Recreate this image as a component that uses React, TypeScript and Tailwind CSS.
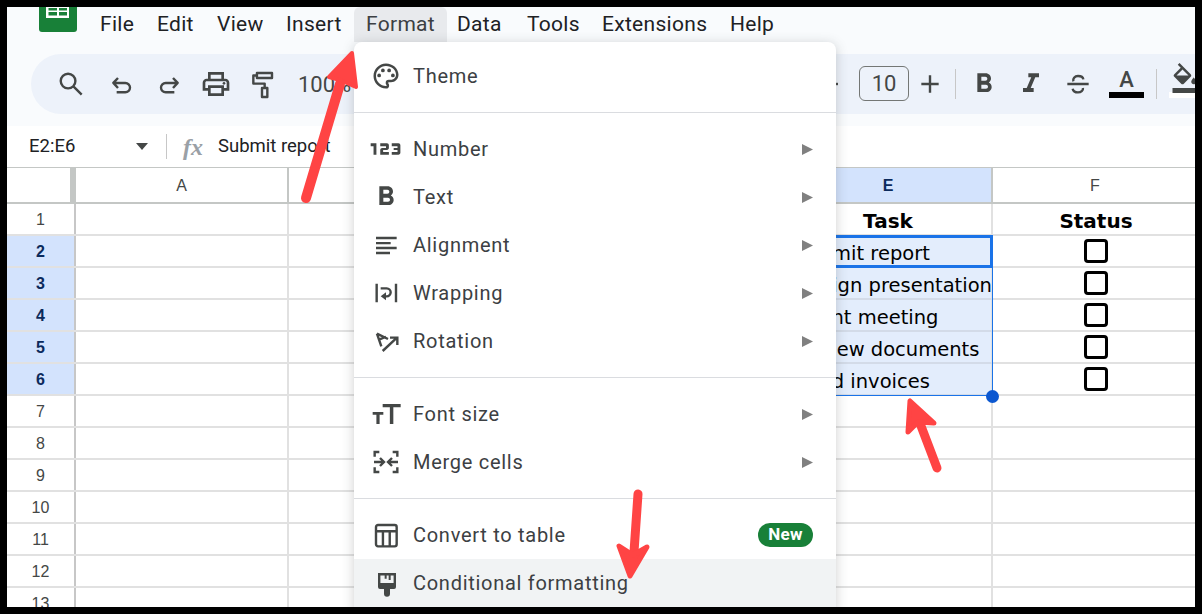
import {
  MdFormatBold,
  MdFormatItalic,
  MdOutlineFormatColorFill,
  MdOutlinePalette,
  MdOutlinePrint,
  Md123,
} from "react-icons/md";
import type { ReactNode } from "react";

const tabs = [
  { label: "File", cls: "ml-[23px] w-[57px]" },
  { label: "Edit", cls: "w-[60px]" },
  { label: "View", cls: "w-[69px]" },
  { label: "Insert", cls: "w-[68px]" },
];
const tabsAfter = [
  { label: "Data", cls: "ml-[10px] w-[70px]" },
  { label: "Tools", cls: "w-[75px]" },
  { label: "Extensions", cls: "w-[128px]" },
  { label: "Help", cls: "w-[60px]" },
];

function Line({ d, fill }: { d: string; fill?: boolean }) {
  return (
    <svg
      viewBox="0 0 24 24"
      className="w-8 h-8 shrink-0"
      fill={fill ? "currentColor" : "none"}
      stroke="currentColor"
      strokeWidth="1.8"
      strokeLinejoin="round"
    >
      <path d={d} />
    </svg>
  );
}

const IconSearch = () => <Line d="M9.800 4.300a5.500 5.500 0 1 0 0 11a5.500 5.500 0 0 0 0-11zM13.800 13.800L20 20" />;
const IconUndo = () => <Line d="M9 7.500L5.500 11.200L9 15M5.500 11.200H14.500a3.500 3.500 0 0 1 0 7H8" />;
const IconRedo = () => <Line d="M15 7.500L18.500 11.200L15 15M18.500 11.200H9.500a3.500 3.500 0 0 0 0 7H16" />;
const IconRoller = () => <Line d="M6.700 3.800H18V7.500H6.700zM6.700 5.600H4V11.700H12.500V15M10.500 15H14.500V21.700H10.500z" />;
const IconMinus = () => <Line d="M6 12H18" />;
const IconPlus = () => <Line d="M5.500 12H18.500M12 5.500V18.500" />;
const IconStrike = () => (
  <Line d="M4 12H20M8.500 10c-.6-2 1-4 3.500-4s3.800 1 4 2.500M8 15.500c.3 1.500 1.700 2.800 4 2.800s4-1.400 3.700-3.300" />
);
const IconAlign = () => <Line d="M4.500 6.800H20M4.500 10.600H15.500M4.500 14.300H20M4.500 18H15" />;
const IconTable = () => <Line d="M6 4.500H18.500a1.500 1.500 0 0 1 1.500 1.500V19a1.500 1.500 0 0 1-1.500 1.500H6A1.500 1.500 0 0 1 4.500 19V6A1.500 1.500 0 0 1 6 4.500zM4.500 9.200H20M9.700 9.200V20.500M14.800 9.200V20.500" />;

const IconWrap = () => (
  <svg viewBox="0 0 24 24" className="w-8 h-8" fill="none" stroke="#444746" strokeWidth="1.8">
    <path d="M5 5v14M19.500 5v14" />
    <path d="M8 8.500h4.500a3 3 0 0 1 0 6H10" />
    <path d="M12 11.500v6l-4-3z" fill="#444746" stroke="none" />
  </svg>
);
const IconRotate = () => (
  <svg viewBox="0 0 24 24" className="w-8 h-8" fill="none" stroke="#444746" strokeWidth="1.800">
    <path d="M5.200 6.500L13.500 10.500M5.200 6.500L8.500 16M6.800 11L12 8.800" />
    <path d="M9.500 19.500L20 9.700M15 9.500h5.500V15" />
  </svg>
);
const IconFontSize = () => (
  <svg viewBox="0 0 24 24" className="w-8 h-8" fill="#444746">
    <path d="M9.500 4.500h13.500v2.400h-5.500V19.500h-2.600V6.900H9.500z" />
    <path d="M2 10.500h8v2H7.200V19.500H4.800v-7H2z" />
  </svg>
);
const IconMerge = () => (
  <svg viewBox="0 0 24 24" className="w-8 h-8" fill="none" stroke="#444746" strokeWidth="1.800">
    <path d="M7 4.500H3.500V8M17 4.500h3.500V8M7 19.500H3.500V16M17 19.500h3.500V16" />
    <path d="M3 12h7M7.500 9l3 3-3 3M21 12h-7M16.500 9l-3 3 3 3" />
  </svg>
);
const IconBrush = () => (
  <svg viewBox="0 0 24 24" className="w-8 h-8">
    <path d="M6 4.500h13.500v10.500a1.500 1.500 0 0 1-1.500 1.500h-3V20a2.200 2.200 0 0 1-4.500 0v-3.500H7.500a1.500 1.500 0 0 1-1.500-1.500z" fill="#444746" />
    <path d="M7.800 6.300h3.200v2.500h1.500V6.300h1.500v3.500h1.500V6.300h2.200v5.700H7.800z" fill="#f1f3f4" />
  </svg>
);

const Caret = () => (
  <svg viewBox="0 0 10 10" className="w-[11px] h-[11px] ml-auto mr-[23px]">
    <polygon points="0,0 10,5 0,10" fill="#808080" />
  </svg>
);

function MenuRow({
  icon,
  label,
  sub,
  badge,
  hover,
}: {
  icon: ReactNode;
  label: string;
  sub?: boolean;
  badge?: boolean;
  hover?: boolean;
}) {
  return (
    <div className={`h-12 flex items-center pl-4 ${hover ? "bg-[#f1f3f4]" : ""}`}>
      <span className="w-8 h-8 flex items-center justify-center shrink-0 text-[#444746]">{icon}</span>
      <span className="ml-[11px] text-[20px] tracking-[0.72px] text-[#3c4043]">{label}</span>
      {sub && <Caret />}
      {badge && (
        <span className="ml-auto mr-[23px] h-[24px] w-[55px] rounded-full bg-[#188038] text-white text-[17px] font-bold tracking-[0.3px] flex items-center justify-center">
          New
        </span>
      )}
    </div>
  );
}

const Sep = () => <div className="h-px bg-[#dadce0] my-3" />;

const tasks: Record<number, string> = {
  1: "Task",
  2: "Submit report",
  3: "Design presentation",
  4: "Client meeting",
  5: "Review documents",
  6: "Send invoices",
};

function Row({ n }: { n: number }) {
  const selected = n >= 2 && n <= 6;
  return (
    <div className="h-8 flex border-b-2 border-[#e1e1e1]">
      <div
        className={`w-[69px] border-r-2 border-[#c7c7c7] pt-[2px] flex items-center justify-center text-[16px] font-['Liberation_Sans',sans-serif] ${
          selected ? "bg-[#d3e3fd] font-bold text-[#0b2a5c]" : "text-[#444746]"
        }`}
      >
        {n}
      </div>
      <div className="w-[213px] border-r-2 border-[#e1e1e1]" />
      <div className="w-[496px]" />
      <div
        className={`w-[208px] border-r-2 border-[#e1e1e1] flex items-center font-['DejaVu_Sans',sans-serif] text-black whitespace-nowrap overflow-hidden ${
          selected
            ? "bg-[#e3edfc] border-b-2 border-b-[#d3dbe8] -mb-[2px] pl-[10px] pt-[6px] text-[19.500px]"
            : "justify-center"
        }`}
      >
        {n === 1 && <span className="font-bold text-[20px] mt-[4px]">{tasks[n]}</span>}
        {selected && tasks[n]}
      </div>
      <div className="flex-1 flex items-center justify-center pl-[4px] font-['DejaVu_Sans',sans-serif]">
        {n === 1 && <span className="font-bold text-[20px] text-black mt-[4px]">Status</span>}
        {selected && <span className="w-6 h-6 border-[3px] border-black rounded-[4px]" />}
      </div>
    </div>
  );
}

export default function App() {
  return (
    <div className="w-[1202px] h-[614px] bg-black p-[7px] font-['Roboto',sans-serif]">
      <div className="relative w-[1188px] h-[600px] bg-white overflow-hidden">
        {/* top chrome */}
        <div className="h-[119px] bg-[#f9fbfd]">
          <div className="h-[35px] flex items-center text-[21px] text-[#202124] tracking-[0.3px]">
            <svg viewBox="0 0 38 25" className="w-[38px] h-[25px] ml-[32px] self-start shrink-0">
              <path d="M0 0h38v22a3 3 0 0 1-3 3H3a3 3 0 0 1-3-3z" fill="#188038" />
              <path d="M7 0h23v11H7z" fill="#fff" />
              <path d="M9.500 1h8.500v2.500H9.500zM20 1h8v2.500h-8zM9.500 5h8.500v3.500H9.500zM20 5h8v3.500h-8z" fill="#188038" />
            </svg>
            {tabs.map((t) => (
              <span key={t.label} className={t.cls}>
                {t.label}
              </span>
            ))}
            <span className="w-[93px] h-[35px] bg-[#e8eaed] rounded-t-[6px] flex items-center pl-3 text-[#3c4043]">
              Format
            </span>
            {tabsAfter.map((t) => (
              <span key={t.label} className={t.cls}>
                {t.label}
              </span>
            ))}
          </div>
          <div className="mt-3 ml-6 h-[60px] bg-[#edf2fa] rounded-l-[30px] flex items-center pl-6 text-[#444746]">
            <IconSearch />
            <span className="ml-[19px]"><IconUndo /></span>
            <span className="ml-[15px]"><IconRedo /></span>
            <MdOutlinePrint size={32} className="shrink-0 ml-[15px]" />
            <span className="ml-[16px]"><IconRoller /></span>
            <span className="ml-[18px] w-[60px] shrink-0 text-[22px]">100%</span>
            <span className="ml-[456px]"><IconMinus /></span>
            <span className="shrink-0 ml-[13px] w-[50px] h-[35px] border border-[#747775] rounded-[6px] flex items-center justify-center text-[22px] -mt-px">
              10
            </span>
            <span className="ml-[5px]"><IconPlus /></span>
            <span className="shrink-0 ml-[9px] w-px h-[30px] bg-[#c7c7c7]" />
            <MdFormatBold size={32} className="shrink-0 ml-[12px]" />
            <MdFormatItalic size={32} className="shrink-0 ml-[15px]" />
            <span className="ml-[15px]"><IconStrike /></span>
            <span className="shrink-0 ml-[15px] w-[35px] h-[32px] -mt-[4px] flex flex-col items-center justify-end">
              <span className="text-[22px] font-medium leading-[24px]">A</span>
              <span className="w-[35px] h-[6px] bg-black" />
            </span>
            <span className="shrink-0 ml-[12px] w-px h-[30px] bg-[#c7c7c7]" />
            <span className="shrink-0 ml-[12px] w-[26px] h-[32px] -mt-[4px] flex flex-col justify-end relative">
              <MdOutlineFormatColorFill size={30} className="absolute -top-[3px] left-[1px]" />
              <span className="w-[35px] h-[6px] bg-white" />
            </span>
          </div>
        </div>

        {/* formula bar */}
        <div className="h-[42px] flex items-center border-b border-[#c4c7c5] text-[18.500px] text-[#202124]">
          <span className="ml-[22px] w-[100px]">E2:E6</span>
          <svg viewBox="0 0 12 7" className="w-3 h-[7px] ml-[7px]">
            <polygon points="0,0 12,0 6,7" fill="#444746" />
          </svg>
          <span className="ml-[18px] w-px h-[25px] bg-[#c7c7c7]" />
          <span className="ml-[16px] w-[26px] text-[24px] font-bold italic text-[#9aa0a6] font-['Liberation_Serif',serif] leading-none">
            fx
          </span>
          <span className="ml-[9px]">Submit report</span>
        </div>

        {/* grid */}
        <div className="relative">
          <div className="h-[36px] flex border-b-2 border-[#c4c7c5] text-[16px] font-['Liberation_Sans',sans-serif] text-[#444746]">
            <div className="w-[69px] border-r-[6px] border-[#c4c7c5]" />
            <div className="w-[213px] pt-[2px] border-r-2 border-[#c4c7c5] flex items-center justify-center">A</div>
            <div className="w-[496px]" />
            <div className="w-[208px] pt-[2px] bg-[#d3e3fd] border-r-2 border-[#c4c7c5] flex items-center justify-center font-bold text-[#0b2a5c]">
              E
            </div>
            <div className="flex-1 pt-[2px] pl-[2px] flex items-center justify-center">F</div>
          </div>
          {Array.from({ length: 13 }, (_, i) => (
            <Row key={i} n={i + 1} />
          ))}
          {/* selection */}
          <div className="absolute left-[778px] top-[67px] w-[208px] h-[161px] border border-[#1a73e8]" />
          <div className="absolute left-[778px] top-[67px] w-[208px] h-[33px] border-[3px] border-[#1a73e8]" />
          <div className="absolute left-[979px] top-[222px] w-[13px] h-[13px] rounded-full bg-[#0b57d0]" />
        </div>

        {/* format menu */}
        <div className="absolute left-[347px] top-[35px] w-[482px] h-[570px] bg-white rounded-t-[8px] shadow-[0_2px_12px_rgba(60,64,67,0.25)] pt-[10px]">
          <MenuRow icon={<MdOutlinePalette size={30} />} label="Theme" />
          <Sep />
          <MenuRow icon={<Md123 size={46} className="shrink-0" />} label="Number" sub />
          <MenuRow icon={<MdFormatBold size={34} />} label="Text" sub />
          <MenuRow icon={<IconAlign />} label="Alignment" sub />
          <MenuRow icon={<IconWrap />} label="Wrapping" sub />
          <MenuRow icon={<IconRotate />} label="Rotation" sub />
          <Sep />
          <MenuRow icon={<IconFontSize />} label="Font size" sub />
          <MenuRow icon={<IconMerge />} label="Merge cells" sub />
          <Sep />
          <MenuRow icon={<IconTable />} label="Convert to table" badge />
          <MenuRow icon={<IconBrush />} label="Conditional formatting" hover />
        </div>

        {/* annotation arrows */}
        <svg className="absolute left-0 top-0 w-[1188px] h-[600px] pointer-events-none" viewBox="7 7 1188 600">
          <g fill="#ff4444" stroke="#ff4444" strokeLinecap="round" strokeLinejoin="round">
            <path d="M306 198L340 84" strokeWidth="10" fill="none" />
            <polygon points="352,53 329,77 340,80 356,87" strokeWidth="4" />
            <path d="M638 494L634 552" strokeWidth="9" fill="none" />
            <polygon points="630,576 619,546 633,555 647,547" strokeWidth="5" />
            <path d="M937 468L918 418" strokeWidth="9" fill="none" />
            <polygon points="910,401 908,432 918,422 934,423" strokeWidth="5" />
          </g>
        </svg>
      </div>
    </div>
  );
}
